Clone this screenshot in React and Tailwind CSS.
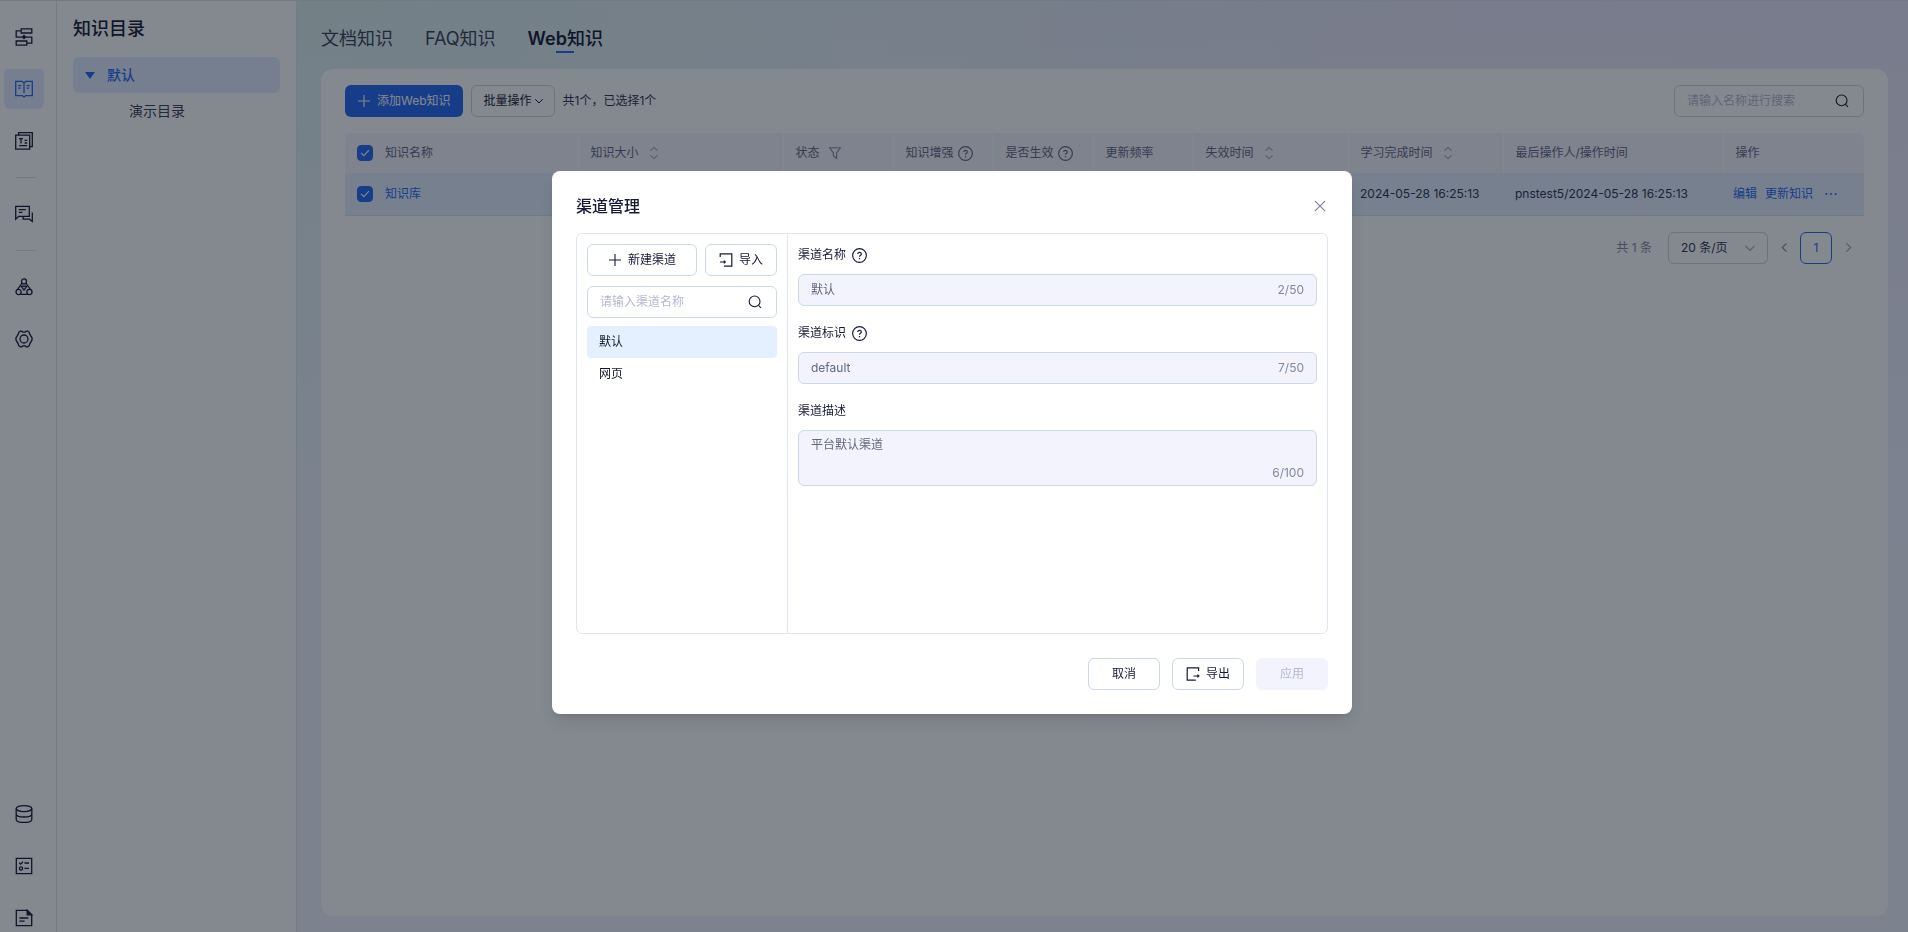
import React, { useState } from 'react';

function Svg({ size = 20, box = 20, className = '', children }) {
  return (
    <svg
      width={size}
      height={size}
      viewBox={`0 0 ${box} ${box}`}
      fill="none"
      stroke="currentColor"
      strokeWidth="1.3"
      className={`shrink-0 ${className}`}
      aria-hidden="true"
    >
      {children}
    </svg>
  );
}

const FlowIcon = () => (
  <Svg>
    <path d="M7.2 1.8h10.6v4.2H7.2zM2.2 14h10.6v4.2H2.2z" />
    <path d="M7.2 3.9h-5v6.2h6M11.8 10.1h6v6h-5" />
    <path d="M10 7.6l2.4 2.5-2.4 2.5-2.4-2.5z" fill="currentColor" stroke="none" />
  </Svg>
);

const BookIcon = () => (
  <Svg>
    <path d="M10 4L8.3 2.4H1.7v14.2h6.6L10 18l1.7-1.4h6.6V2.4h-6.6L10 4zM10 4v10.2" />
    <path d="M4.2 6.6h3.2M4.2 9.2h2.4M12.6 6.6h3.2M12.6 9.2H15" />
  </Svg>
);

const TemplateIcon = () => (
  <Svg>
    <path d="M1.7 4.2h14v14h-14z" />
    <path d="M4.6 4.2V1.7h13.7v14h-2.6" />
    <path d="M5 7.6h4M7 7.6v4.8M10.6 9.4h2.6M10.6 12h2.6M5.2 14.6h8" />
  </Svg>
);

const ChatIcon = () => (
  <Svg>
    <path d="M1.7 2.4h13.6v10H4.6l-2.9 2.8z" />
    <path d="M4.8 5.6h7M4.8 8.4h3.6M18.3 8.4v9l-2.8-2.2H9.2v-2.8" />
  </Svg>
);

const ClusterIcon = () => (
  <Svg>
    <circle cx="10" cy="4.4" r="2.5" />
    <circle cx="4.6" cy="15" r="2.6" />
    <circle cx="15.4" cy="15" r="2.6" />
    <path d="M8.2 6.2L3.4 12.7M11.8 6.2l4.8 6.5M6.6 17.3h6.8" />
    <path d="M7.4 9.6l1.5-.7 1.1.7 1.1-.7 1.5.7-2.6 3.6z" />
  </Svg>
);

const SettingIcon = () => (
  <Svg>
    <path d="M6.2 2.2h1.6l1 .9h2.4l1-.9h1.6l1.6 1.4.3 1.6 2.3 3.6v2.4l-2.3 3.6-.3 1.6-1.6 1.4h-1.6l-1-.9H8.8l-1 .9H6.2l-1.6-1.4-.3-1.6L2 11.2V8.8l2.3-3.6.3-1.6z" />
    <circle cx="10" cy="10" r="4" />
  </Svg>
);

const DatabaseIcon = () => (
  <Svg>
    <ellipse cx="10" cy="4.6" rx="7.8" ry="3" />
    <path d="M2.2 4.6v10.8c0 1.7 3.5 3 7.8 3s7.8-1.3 7.8-3V4.6M2.2 10c0 1.7 3.5 3 7.8 3s7.8-1.3 7.8-3" />
  </Svg>
);

const ChecklistIcon = () => (
  <Svg>
    <path d="M2.3 2.3h15.4v15.4H2.3z" />
    <path d="M5.2 6.8l1.4 1.3L9 5.8M10.4 7H15M10.4 12.4H15" />
    <circle cx="7" cy="12.4" r="1.6" />
  </Svg>
);

const DocIcon = () => (
  <Svg>
    <path d="M2.3 2.3h11l4.4 4.4v11H2.3z" />
    <path d="M13.2 2.3v4.5h4.5z" fill="currentColor" />
    <path d="M5.4 10h9M5.4 13.2h5.2" />
  </Svg>
);

const PlusIcon = () => (
  <Svg size={14} box={14}>
    <path d="M7 1v12M1 7h12" strokeWidth="1.1" />
  </Svg>
);

const SearchIcon = () => (
  <Svg size={14} box={14}>
    <circle cx="6.6" cy="6.4" r="5.4" strokeWidth="1.1" />
    <path d="M10.6 10.4l2.4 2.4" strokeWidth="1.1" />
  </Svg>
);

const HelpIcon = () => (
  <Svg size={15} box={14}>
    <circle cx="7" cy="7" r="6.4" strokeWidth="1.1" />
    <path d="M5.3 5.7c0-1 .7-1.7 1.7-1.7s1.7.7 1.7 1.6c0 1.2-1.7 1.3-1.7 2.6" strokeWidth="1.1" />
    <path d="M7 9.3v1.2" strokeWidth="1.2" />
  </Svg>
);

const SortIcon = () => (
  <Svg size={14} box={14} className="text-[#9ea1b8]">
    <path d="M3.4 4.6L7 1.4l3.6 3.2M3.4 9.4L7 12.6l3.6-3.2" strokeWidth="1.1" />
  </Svg>
);

const FilterIcon = () => (
  <Svg size={14} box={14} className="text-[#83869e]">
    <path d="M1.6 1.8h10.8L8.6 7v5.4L5.4 10V7z" strokeWidth="1.1" />
  </Svg>
);

const ChevronDown = ({ size = 10, className = '' }) => (
  <Svg size={size} box={10} className={className}>
    <path d="M1.2 3.2L5 7l3.8-3.8" strokeWidth="1" />
  </Svg>
);

const ImportIcon = () => (
  <Svg size={14} box={14}>
    <path d="M1.2 4V.8h11.6v12.4H5" strokeWidth="1.2" />
    <path d="M1 9h5M4.8 7.6L6.4 9l-1.6 1.4" strokeWidth="1.1" />
  </Svg>
);

const ExportIcon = () => (
  <Svg size={14} box={14}>
    <path d="M12.6 4V.8H1.2v12.4h8.6" strokeWidth="1.2" />
    <path d="M7.4 9h5.4M11.4 7.6L13 9l-1.6 1.4" strokeWidth="1.1" />
  </Svg>
);

function RailItem({ label, active, children }) {
  return (
    <a
      href="#"
      aria-label={label}
      className={`flex size-10 items-center justify-center rounded-md ${
        active ? 'bg-[#e2edff] text-[#2468f2]' : 'text-[#151b36]'
      }`}
    >
      {children}
    </a>
  );
}

function Rail() {
  return (
    <nav className="box-content flex w-14 shrink-0 flex-col overflow-hidden border-r border-[#e0e3f0] bg-white">
      <div className="flex flex-col gap-3 pt-4 pl-1">
        <RailItem label="流程"><FlowIcon /></RailItem>
        <RailItem label="知识" active><BookIcon /></RailItem>
        <RailItem label="模板"><TemplateIcon /></RailItem>
      </div>
      <div className="my-4 ml-4 h-px w-5 bg-[#dfe1ee]" />
      <div className="pl-1">
        <RailItem label="对话"><ChatIcon /></RailItem>
      </div>
      <div className="my-4 ml-4 h-px w-5 bg-[#dfe1ee]" />
      <div className="flex flex-col gap-3 pl-1">
        <RailItem label="模型"><ClusterIcon /></RailItem>
        <RailItem label="设置"><SettingIcon /></RailItem>
      </div>
      <div className="mt-auto -mb-1.5 flex flex-col gap-3 pl-1">
        <RailItem label="数据"><DatabaseIcon /></RailItem>
        <RailItem label="任务"><ChecklistIcon /></RailItem>
        <RailItem label="文档"><DocIcon /></RailItem>
      </div>
    </nav>
  );
}

function Directory() {
  return (
    <aside className="w-60 shrink-0 border-r border-[#e0e4f0] bg-white px-4 pt-4">
      <h2 className="text-lg leading-6 font-medium text-[#151b36]">知识目录</h2>
      <ul className="mt-4 text-sm">
        <li className="flex h-9 items-center gap-3 rounded-md bg-[#e2edff] px-3 font-medium text-[#2468f2]">
          <svg width="10" height="7" viewBox="0 0 10 7" fill="currentColor" aria-hidden="true">
            <path d="M0 0h10L5 7z" />
          </svg>
          默认
        </li>
        <li className="flex h-9 items-center pl-14 text-[#3a3f58]">演示目录</li>
      </ul>
    </aside>
  );
}

function Tabs() {
  return (
    <nav className="flex gap-8 pt-6 text-lg leading-7 text-[#3a3f58]">
      <a href="#">文档知识</a>
      <a href="#">FAQ知识</a>
      <a href="#" className="flex flex-col items-center text-[#151b36]">
        <span className="font-medium">
          <span className="font-semibold">Web</span>知识
        </span>
        <span className="-mt-0.5 h-0.5 w-[18px] bg-[#2468f2]" />
      </a>
    </nav>
  );
}

function Checkbox({ label }) {
  return (
    <span className="grid size-4 place-items-center">
      <input
        type="checkbox"
        defaultChecked
        aria-label={label}
        className="col-start-1 row-start-1 size-4 appearance-none rounded-[4px] border border-[#c8cbe0] checked:border-[#2468f2] checked:bg-[#2468f2]"
      />
      <svg
        width="10"
        height="8"
        viewBox="0 0 10 8"
        fill="none"
        stroke="white"
        strokeWidth="1.1"
        className="pointer-events-none col-start-1 row-start-1"
        aria-hidden="true"
      >
        <path d="M1 3.8l2.8 2.8L9 1.2" />
      </svg>
    </span>
  );
}

const columns = [
  { title: '知识大小', width: 'w-[205px]', icon: <SortIcon />, gap: 'gap-2' },
  { title: '状态', width: 'w-[110px]', icon: <FilterIcon />, gap: 'gap-2' },
  { title: '知识增强', width: 'w-[100px]', icon: <HelpIcon />, gap: 'gap-1' },
  { title: '是否生效', width: 'w-[100px]', icon: <HelpIcon />, gap: 'gap-1' },
  { title: '更新频率', width: 'w-[100px]' },
  { title: '失效时间', width: 'w-[155px]', icon: <SortIcon />, gap: 'gap-2' },
  { title: '学习完成时间', width: 'w-[155px]', icon: <SortIcon />, gap: 'gap-2' },
  { title: '最后操作人/操作时间', width: 'w-[220px]' },
  { title: '操作', width: 'w-[141px]' },
];

function KnowledgeTable() {
  return (
    <table className="mt-4 w-full table-fixed text-left text-xs">
      <thead>
        <tr className="h-10 text-[#63677f]">
          <th className="rounded-tl-md bg-[#f4f4fd] px-3 font-normal">
            <div className="flex items-center gap-3">
              <Checkbox label="全选" />
              知识名称
            </div>
          </th>
          {columns.map((col) => (
            <th
              key={col.title}
              className={`border-l border-white bg-[#f4f4fd] px-3 font-normal last:rounded-tr-md ${col.width}`}
            >
              <div className={`flex items-center whitespace-nowrap ${col.gap || ''}`}>
                {col.title}
                {col.icon}
              </div>
            </th>
          ))}
        </tr>
      </thead>
      <tbody>
        <tr className="h-[42px] bg-[#e4effe] text-[#2d3250]">
          <td className="border-b border-[#d9dff0] px-3">
            <div className="flex items-center gap-3">
              <Checkbox label="选择知识库" />
              <a href="#" className="text-[#2468f2]">知识库</a>
            </div>
          </td>
          <td colSpan={6} className="border-b border-[#d9dff0]" />
          <td className="border-b border-[#d9dff0] px-3 whitespace-nowrap">2024-05-28 16:25:13</td>
          <td className="border-b border-[#d9dff0] px-3 whitespace-nowrap">
            pnstest5/2024-05-28 16:25:13
          </td>
          <td className="border-b border-[#d9dff0] px-2.5">
            <div className="flex items-center gap-2 whitespace-nowrap text-[#2468f2]">
              <a href="#">编辑</a>
              <a href="#">更新知识</a>
              <button type="button" aria-label="更多" className="ml-1">
                <svg width="12" height="4" viewBox="0 0 12 4" fill="currentColor" aria-hidden="true">
                  <circle cx="1.4" cy="2" r="1" />
                  <circle cx="6" cy="2" r="1" />
                  <circle cx="10.6" cy="2" r="1" />
                </svg>
              </button>
            </div>
          </td>
        </tr>
      </tbody>
    </table>
  );
}

function Pagination() {
  return (
    <div className="mt-4 flex items-center justify-end text-xs">
      <span className="text-[#83869e]">共 1 条</span>
      <div className="relative ml-4">
        <select
          aria-label="每页条数"
          className="h-8 w-[100px] appearance-none rounded-md border border-[#d0d4e6] px-3 text-[#2d3250]"
        >
          <option>20 条/页</option>
          <option>50 条/页</option>
        </select>
        <ChevronDown size={12} className="pointer-events-none absolute top-2.5 right-3 text-[#a8abc2]" />
      </div>
      <button type="button" aria-label="上一页" className="flex w-8 justify-center text-[#83869e]">
        <ChevronDown size={11} className="rotate-90" />
      </button>
      <button type="button" className="size-8 rounded-md border border-[#2468f2] text-[#2468f2]">
        1
      </button>
      <button type="button" aria-label="下一页" className="flex w-8 justify-center text-[#9ea1b8]">
        <ChevronDown size={11} className="-rotate-90" />
      </button>
    </div>
  );
}

function KnowledgePage() {
  return (
    <main className="flex min-w-0 flex-1 flex-col bg-[linear-gradient(to_bottom,transparent,#eff4ff_60%),linear-gradient(to_right,#dcf0ee,#e3eef5_35%,#e7e8f8_65%,#e8e6f8)] pr-5 pb-4 pl-6">
      <Tabs />
      <section className="mt-4 flex-1 rounded-xl bg-white px-6 pt-4">
        <div className="flex items-center text-xs">
          <button
            type="button"
            className="flex h-8 items-center gap-1.5 rounded-md bg-[#2468f2] px-3 text-white"
          >
            <PlusIcon />
            添加Web知识
          </button>
          <button
            type="button"
            className="ml-2 flex h-8 items-center gap-0.5 rounded-md border border-[#d0d4e6] pr-2.5 pl-3 text-[#151b36]"
          >
            批量操作
            <ChevronDown />
          </button>
          <span className="ml-2 text-[#2d3250]">共1个，已选择1个</span>
          <label className="ml-auto flex h-8 w-[190px] items-center rounded-md border border-[#d0d4e6] pr-3.5 pl-3 text-[#151b36]">
            <input
              type="text"
              aria-label="搜索名称"
              placeholder="请输入名称进行搜索"
              className="min-w-0 flex-1 outline-none placeholder:text-[#b4b8d0]"
            />
            <SearchIcon />
          </label>
        </div>
        <KnowledgeTable />
        <Pagination />
      </section>
    </main>
  );
}

function Field({ id, label, value, max }) {
  return (
    <div>
      <label htmlFor={id} className="flex h-[22px] items-center gap-1.5 text-[#151b36]">
        {label}
        <HelpIcon />
      </label>
      <div className="mt-2 flex h-8 items-center rounded-md border border-[#cbd8e8] bg-[#f2f3fc] px-3 text-[#83869e]">
        <input id={id} type="text" disabled value={value} className="min-w-0 flex-1 text-[#63677f]" />
        {value.length}/{max}
      </div>
    </div>
  );
}

const channels = [
  { name: '默认', key: 'default', desc: '平台默认渠道' },
  { name: '网页', key: 'web', desc: '' },
];

const outlineButton =
  'flex h-8 items-center justify-center rounded-md border border-[#cbd8e8] bg-white text-[#151b36]';

function ChannelDialog() {
  const [current, setCurrent] = useState(0);
  const channel = channels[current];

  return (
    <div className="fixed inset-0 flex items-start justify-center overflow-auto bg-[#09111f]/50 pt-[171px] pr-1">
      <div
        role="dialog"
        aria-labelledby="channel-title"
        className="w-[800px] max-w-full rounded-lg bg-white p-6 text-xs shadow-lg"
      >
        <div className="flex h-[22px] items-center justify-between">
          <h3 id="channel-title" className="text-base font-medium text-[#151b36]">渠道管理</h3>
          <button type="button" aria-label="关闭" className="mr-0.5 text-[#7d82a0]">
            <svg width="12" height="12" viewBox="0 0 12 12" fill="none" stroke="currentColor" strokeWidth="1.2">
              <path d="M.8.8l10.4 10.4M11.2.8L.8 11.2" />
            </svg>
          </button>
        </div>

        <div className="mt-4 flex h-[401px] rounded-md border border-[#dfe6f2]">
          <div className="flex w-[211px] shrink-0 flex-col border-r border-[#dfe6f2] p-2.5">
            <div className="flex gap-2">
              <button type="button" className={`${outlineButton} flex-1 gap-1.5`}>
                <PlusIcon />
                新建渠道
              </button>
              <button type="button" className={`${outlineButton} w-[72px] gap-1.5`}>
                <ImportIcon />
                导入
              </button>
            </div>
            <label className="mt-2.5 flex h-8 items-center rounded-md border border-[#cbd8e8] pr-3.5 pl-3 text-[#151b36]">
              <input
                type="text"
                aria-label="搜索渠道"
                placeholder="请输入渠道名称"
                className="min-w-0 flex-1 outline-none placeholder:text-[#b4b8d0]"
              />
              <SearchIcon />
            </label>
            <ul className="mt-2 text-[#151b26]">
              {channels.map((item, i) => (
                <li key={item.key}>
                  <button
                    type="button"
                    onClick={() => setCurrent(i)}
                    className={`h-8 w-full rounded-[4px] px-3 text-left ${i === current ? 'bg-[#e4efff]' : ''}`}
                  >
                    {item.name}
                  </button>
                </li>
              ))}
            </ul>
          </div>

          <div className="flex min-w-0 flex-1 flex-col gap-4 p-2.5">
            <Field id="channel-name" label="渠道名称" value={channel.name} max={50} />
            <Field id="channel-key" label="渠道标识" value={channel.key} max={50} />
            <div>
              <label htmlFor="channel-desc" className="flex h-[22px] items-center text-[#151b36]">
                渠道描述
              </label>
              <div className="mt-2 flex h-14 rounded-md border border-[#cbd8e8] bg-[#f2f3fc] px-3 py-1 text-[#83869e]">
                <textarea
                  id="channel-desc"
                  disabled
                  value={channel.desc}
                  className="min-w-0 flex-1 resize-none leading-5 text-[#63677f]"
                />
                <span className="self-end">{channel.desc.length}/100</span>
              </div>
            </div>
          </div>
        </div>

        <div className="mt-6 flex justify-end gap-3">
          <button type="button" className={`${outlineButton} w-[72px]`}>取消</button>
          <button type="button" className={`${outlineButton} w-[72px] gap-1.5`}>
            <ExportIcon />
            导出
          </button>
          <button type="button" disabled className="h-8 w-[72px] rounded-md bg-[#f2f3fc] text-[#b4b8d0]">
            应用
          </button>
        </div>
      </div>
    </div>
  );
}

export default function App() {
  return (
    <div className="flex h-screen border-t border-[#dfe1f2] font-[Inter,'Noto_Sans_CJK_SC',sans-serif]">
      <Rail />
      <Directory />
      <KnowledgePage />
      <ChannelDialog />
    </div>
  );
}
